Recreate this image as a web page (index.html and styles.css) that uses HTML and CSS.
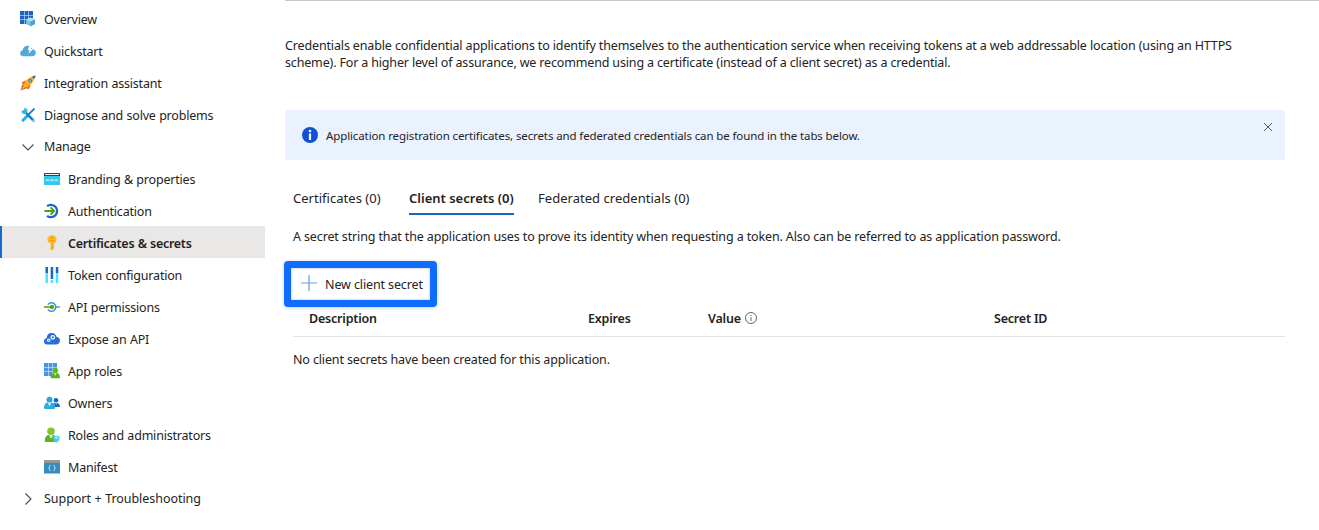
FILE: index.html
```html
<!DOCTYPE html>
<html lang="en">
<head>
<meta charset="utf-8">
<title>Certificates &amp; secrets</title>
<link rel="stylesheet" href="styles.css">
</head>
<body>
<div class="layout">
<nav class="sidebar">
  <a class="item"><svg class="icon" viewBox="0 0 16 16"><path fill="#1b62c4" d="M0 0h4v4H0zM4.500 0h4v4h-4zM9 0h4v4H9zM0 4.500h4v4H0zM4.500 4.500h4v4h-4zM9 4.500h4v4H9zM0 9h4v4H0zM4.500 9h4v4h-4z"/><path fill="#74c2e8" d="M10.500 6.500 15 8.500v4.500l-4.500 2.300L6 13V8.500z"/><path fill="#b7e3f7" d="M6 8.500l4.500-2 4.500 2-4.500 2z"/><path fill="#4ba3d3" d="M10.500 10.500 15 8.500V13l-4.500 2.300z"/></svg><span>Overview</span></a>
  <a class="item"><svg class="icon" viewBox="0 0 16 16"><path fill="#53a9d6" d="M3.200 13.200A3 3 0 0 1 .2 10.300c0-1.700 1-2.800 2.500-3C3 4.300 5 2.700 7.500 2.700c2.300 0 4.300 1.300 4.800 3.500 2.100.2 3.500 1.600 3.500 3.500s-1.500 3.500-3.500 3.500z"/><path fill="#fff" d="M9.500 2.200h3L11 6h2L8.300 11l1.300-4H7.700z"/></svg><span>Quickstart</span></a>
  <a class="item"><svg class="icon" viewBox="0 0 16 16"><path fill="#e8742c" d="M1.500 7.500 5 5.500l3 1-5 3.500zM8.500 14.500l2-3.500-1-3-3.500 5z"/><path fill="#f36b2b" d="M.5 15.500 2 10l3-1.500L7.500 11 6 13.800z"/><path fill="#fbae24" d="M3.500 10C5.500 5 9 2 15 .8 14.300 6.500 11 10.500 6 12.500z"/><path fill="#fcc94b" d="M1 14.800 5 10l1 1z"/><path fill="#1b65b5" d="M12 1.700 15.800.3 14.400 4z"/><circle cx="10.200" cy="5.800" r="1.700" fill="#1769bd"/><circle cx="10.200" cy="5.800" r=".9" fill="#83d3f4"/></svg><span>Integration assistant</span></a>
  <a class="item"><svg class="icon" viewBox="0 0 16 16"><path stroke="#198ab3" stroke-width="1.800" d="M14.500 1.500 8 8"/><path stroke="#29aee6" stroke-width="3" stroke-linecap="round" d="M7 9.200 3 13.300"/><path stroke="#1683c9" stroke-width="2.500" stroke-linecap="round" d="M4.200 4.200 13.500 13.500"/><path fill="#39b7e8" d="M1.500 3.500 3.700 4.700 5 3.500 3.800 1.200c2.400-.6 4.300 1 3.600 3.500L5 7C2.700 7.500.9 5.700 1.500 3.500z"/><circle cx="13.300" cy="13.300" r=".7" fill="#fff"/></svg><span>Diagnose and solve problems</span></a>
  <a class="item group"><svg class="icon" viewBox="0 0 16 16"><path class="chevron" d="M2.500 5.500 8 11l5.500-5.500"/></svg><span>Manage</span></a>
  <a class="item child"><svg class="icon" viewBox="0 0 16 16"><path fill="#33c8ed" d="M0 2h16v11.500a.5.500 0 0 1-.5.500H.5a.5.500 0 0 1-.5-.5z"/><path fill="#154b8c" d="M0 2h16v3H0z"/><path fill="#e9f5ff" d="M1 3h14v1H1z"/><path fill="none" stroke="#d7f7ff" stroke-width=".8" d="M2 8.500l.8 1.600.8-1.600.8 1.600.8-1.600M6.300 8.500l.8 1.600.8-1.600.8 1.600.8-1.600M10.600 8.500l.8 1.600.8-1.600.8 1.600.8-1.600"/></svg><span>Branding &amp; properties</span></a>
  <a class="item child"><svg class="icon" viewBox="0 0 16 16"><path fill="none" stroke="#1b6ac9" stroke-width="2.300" d="M3 3.200A6.200 6.200 0 1 1 3 12.800"/><path fill="none" stroke="#4f9e1d" stroke-width="1.900" d="M.5 8h9.200M6.500 4.300 10.200 8l-3.700 3.700"/></svg><span>Authentication</span></a>
  <a class="item child selected"><svg class="icon" viewBox="0 0 16 16"><path fill="#fdb92a" d="M8 .2c2.800 0 4.600 1.700 4.600 4.300 0 1.800-1 3.200-2.600 3.900v5.300L8 15.800l-1.700-1.700V12l.8-.8-.8-.9.800-.8-.8-1C4.500 7.700 3.400 6.300 3.400 4.500 3.400 1.900 5.200.2 8 .2z"/><circle cx="8" cy="2.800" r="1.100" fill="#e69312"/><path fill="#ee9c19" d="M5.400 5h5.200v.9H5.400zM7.700 8.500h.8v5.300h-.8z"/></svg><span>Certificates &amp; secrets</span></a>
  <a class="item child"><svg class="icon" viewBox="0 0 16 16"><path fill="#1767c4" d="M1.500 0h2.500v6H1.500zM6.700 0h2.500v12H6.700zM11.800 0h2.500v6h-2.500z"/><path fill="#4de3fa" d="M1.500 6h2.500v10H1.500zM6.700 13h2.500v3H6.700zM11.800 6h2.500v10h-2.500z"/></svg><span>Token configuration</span></a>
  <a class="item child"><svg class="icon" viewBox="0 0 16 16"><path stroke="#4ca2ce" stroke-width="1.500" d="M12 8h4"/><path fill="none" stroke="#3b96c8" stroke-width="1.500" d="M3.900 5.700a4.300 4.300 0 1 1 0 4.600"/><circle cx="8" cy="8" r="2.200" fill="#57a51c"/><path stroke="#57a51c" stroke-width="1.600" d="M0 8h7"/></svg><span>API permissions</span></a>
  <a class="item child"><svg class="icon" viewBox="0 0 16 16"><path fill="#276fd2" d="M3.300 13.500A3.200 3.200 0 0 1 0 10.300C0 8.500 1.200 7.300 2.700 7 2.800 3.900 5 2 7.700 2c2.400 0 4.300 1.400 4.800 3.800C14.600 6 16 7.500 16 9.600s-1.500 3.900-3.700 3.900z"/><g fill="none" stroke="#e5f3ff"><circle cx="8.800" cy="6.300" r="1.700" stroke-width="1.400"/><circle cx="4.700" cy="9.300" r="1.200" stroke-width="1.200"/></g></svg><span>Expose an API</span></a>
  <a class="item child"><svg class="icon" viewBox="0 0 16 16"><path fill="#4c92e5" d="M0 0h4v4H0zM4.500 0h4v4h-4zM9 0h4v4H9zM0 4.500h4v4H0zM4.500 4.500h4v4h-4zM9 4.500h4v4H9zM0 9h4v4H0zM4.500 9h4v4h-4z"/><path fill="#5bb124" d="M6.500 14c0-2.500 1.600-3.900 3.300-3.900h2.600c2 0 3.300 1.400 3.600 3.900.1.700-.3 1.200-1 1.200H7.400c-.6 0-.9-.5-.9-1.200z"/><circle cx="11.200" cy="7.500" r="2.800" fill="#60b52a"/><path fill="#c5ed99" d="M10 10.100h2.500l-1.250 3z"/></svg><span>App roles</span></a>
  <a class="item child"><svg class="icon" viewBox="0 0 16 16"><circle cx="12" cy="5.300" r="2.300" fill="#1660cc"/><path fill="#1865cb" d="M8.500 11.500c0-2.300 1.200-3.800 3.500-3.800s3.700 1.300 4 3.400c0 .5-.3.900-.8.900H9z"/><path fill="#caecff" d="M11.200 7.700h1.800l-.9 2z"/><circle cx="5.500" cy="4.800" r="3" fill="#28a7d9"/><path fill="#2dabd9" d="M0 12.500c.1-3.100 1.800-5 4-5h3c2.500 0 4 1.900 4.200 5 0 .9-.5 1.500-1.300 1.500H1.300C.5 14 0 13.400 0 12.500z"/><path fill="#d6f7ff" d="M3.800 7.500h3.500l-1.800 4z"/></svg><span>Owners</span></a>
  <a class="item child"><svg class="icon" viewBox="0 0 16 16"><circle cx="7" cy="4.300" r="3.800" fill="#85c62c"/><path fill="#62ae25" d="M.7 13.700C.8 10 2.700 8 5 8h4c2.500 0 4 2.400 4.200 5.700 0 .8-.5 1.300-1.300 1.300H2c-.8 0-1.300-.5-1.300-1.300z"/><path fill="#e7ffd0" d="M5.200 8h3.600L7 12z"/><path fill="#4ed0ef" d="m9.200 9.600 3.200-1.100 3.400 1.100-.5 4-2.900 2.200-2.800-2.200z"/><path fill="#a7effb" d="m10 10.600 2.500-1 2.500 1-2.500 1z"/></svg><span>Roles and administrators</span></a>
  <a class="item child"><svg class="icon" viewBox="0 0 16 16"><path fill="#398bbb" d="M0 1h16v13.500H0z"/><path fill="#999" d="M0 1h16v2.800H0z"/><path fill="none" stroke="#cceeff" stroke-width=".9" d="M6.500 6.300c-1 0-1 .3-1 1.200 0 .8-.1 1.200-.9 1.400.8.200.9.600.9 1.400 0 .9 0 1.300 1 1.300M9.500 6.300c1 0 1 .3 1 1.200 0 .8.1 1.200.9 1.400-.8.200-.9.600-.9 1.400 0 .9 0 1.300-1 1.300"/></svg><span>Manifest</span></a>
  <a class="item group support"><svg class="icon" viewBox="0 0 16 16"><path class="chevron" d="M5.500 2.500 11 8l-5.500 5.500"/></svg><span>Support + Troubleshooting</span></a>
</nav>
<main class="content">
  <p class="intro"><span class="intro-a">Credentials enable confidential applications to identify themselves to the authentication service when receiving tokens at a web addressable location (using an HTTPS</span><br><span class="intro-b">scheme). For a higher level of assurance, we recommend using a certificate (instead of a client secret) as a credential.</span></p>
  <div class="notice">
    <svg class="notice-icon" viewBox="0 0 16 16"><circle cx="8" cy="8" r="8" fill="#1150d4"/><circle cx="8" cy="4" r="1.300" fill="#fff"/><path fill="#fff" d="M6.900 6.400h2.200V13H6.900z"/></svg>
    <span class="notice-text">Application registration certificates, secrets and federated credentials can be found in the tabs below.</span>
    <svg class="close" viewBox="0 0 10 10"><path d="M1 1l8 8M9 1 1 9"/></svg>
  </div>
  <div class="tabs">
    <a class="tab t1"><span>Certificates (0)</span></a>
    <a class="tab t2 active"><span>Client secrets (0)</span></a>
    <a class="tab t3"><span>Federated credentials (0)</span></a>
  </div>
  <p class="description"><span>A secret string that the application uses to prove its identity when requesting a token. Also can be referred to as application password.</span></p>
  <button class="new-secret"><svg class="plus" viewBox="0 0 16 16"><path d="M8 0v16M0 8h16"/></svg><span>New client secret</span></button>
  <div class="table-head">
    <span class="c1">Description</span><span class="c2">Expires</span><span class="c3">Value <svg class="info" viewBox="0 0 12 12"><circle cx="6" cy="6" r="5.500"/><path d="M6 5.200V9M6 3v1"/></svg></span><span class="c4">Secret ID</span>
  </div>
  <p class="empty"><span>No client secrets have been created for this application.</span></p>
</main>
</div>
</body>
</html>
```
FILE: styles.css
```css
* { box-sizing: border-box; }
body { margin: 0; background: #fff; color: #242322; font: 12.5px/17px "Noto Sans", "Open Sans", sans-serif; letter-spacing: -.14px; overflow: hidden; }
p { margin: 0; }
.layout { display: flex; height: 530px; }
.sidebar { width: 265px; flex: none; padding-top: 2px; display: flex; flex-direction: column; letter-spacing: -.2px; word-spacing: .4px; }
.item { display: flex; align-items: center; gap: 8px; height: 32px; flex: none; padding: 2px 0 0 20px; white-space: nowrap; }
.child { padding-left: 44px; }
.group { padding-top: 1px; }
.support { letter-spacing: -.05px; }
.selected { background: #e9e8e7; border-left: 2px solid #1a6ac7; padding-left: 42px; font-weight: 600; letter-spacing: -.28px; }
.icon { width: 16px; height: 16px; flex: none; fill: none; }
.chevron { fill: none; stroke: #4b4a49; stroke-width: 1.1; }
.content { width: 1034px; margin-left: 20px; flex: none; border-top: 1px solid #c8c8c8; display: flex; flex-direction: column; white-space: nowrap; }
.intro { margin-top: 36px; height: 34px; }
.intro-b { letter-spacing: -.16px; }
.notice { display: flex; align-items: center; width: 1000px; height: 50px; margin-top: 39px; padding: 0 12px 0 17px; background: #ebf2ff; border-radius: 2px; }
.notice-icon { width: 16px; height: 16px; margin-right: 8px; }
.notice-text { font-size: 11.5px; padding-top: 1px; letter-spacing: -.115px; }
.close { width: 10px; height: 10px; margin: -16px 0 0 auto; fill: none; stroke: #5a5a5d; stroke-width: 1; }
.tabs { display: flex; height: 30px; margin: 25px 0 0 8px; font-size: 13px; letter-spacing: .03px; }
.tab { height: 30px; padding-top: 5px; border-bottom: 2px solid transparent; }
.t1 { width: 88px; margin-right: 28px; }
.t2 { width: 105px; margin-right: 24px; }
.active { font-weight: 600; border-color: #1267c8; letter-spacing: 0; }
.description { margin: 13px 0 0 8px; letter-spacing: -.13px; }
.new-secret { display: flex; align-items: center; width: 153px; height: 46px; margin: 16px 0 0 -1px; padding: 0 0 0 10px; border: 7px solid #0f6cff; border-radius: 4px; background: #fff; box-shadow: 0 1px 4px #0003, inset 0 0 3px #0004; color: inherit; font: inherit; letter-spacing: -.12px; white-space: nowrap; }
.plus { width: 16px; height: 16px; margin-right: 8px; margin-top: -3px; flex: none; stroke: #5d9edc; stroke-width: 1.2; }
.table-head { display: grid; grid-template-columns: 279px 120px 286px 1fr; width: 992px; height: 30px; margin-left: 8px; padding: 3px 0 0 16px; border-bottom: 1px solid #e4e4e4; font-weight: 600; letter-spacing: -.2px; }
.info { width: 12px; height: 12px; margin-left: 1px; vertical-align: -1px; fill: none; stroke: #555; stroke-width: .9; }
.empty { margin: 14px 0 0 8px; }
```
